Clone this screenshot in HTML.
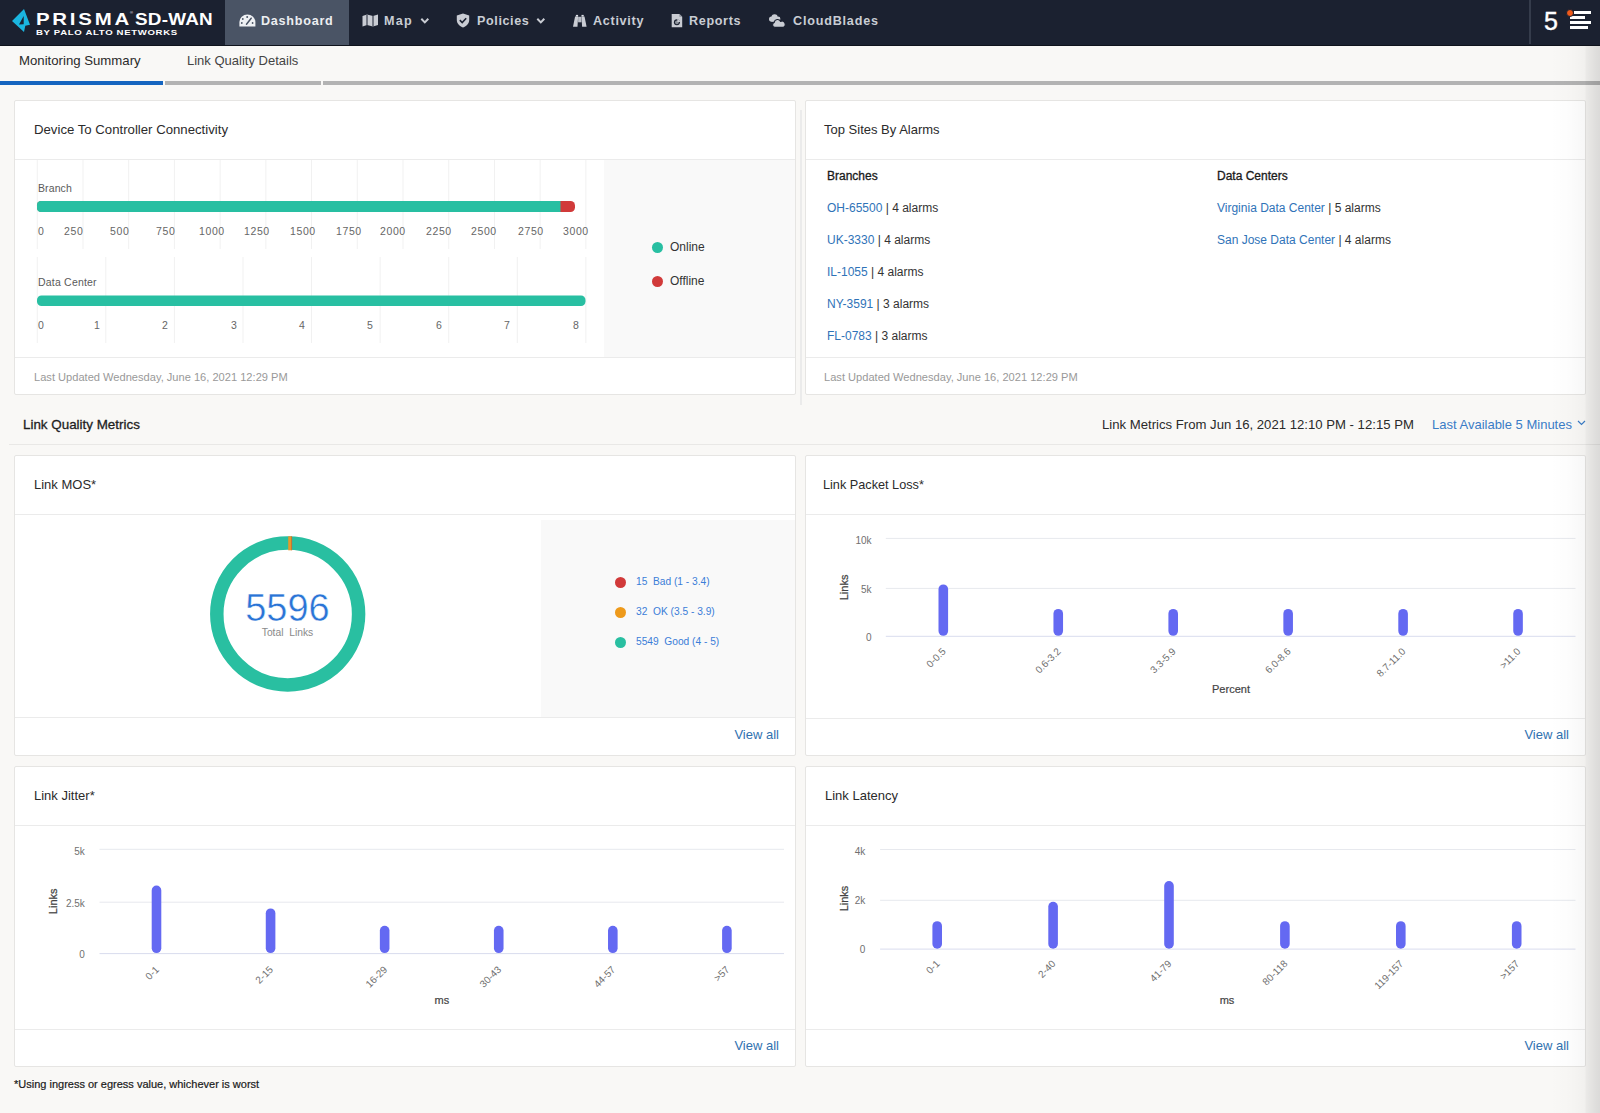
<!DOCTYPE html>
<html><head><meta charset="utf-8">
<style>
*{box-sizing:border-box;margin:0;padding:0}
html,body{width:1600px;height:1113px;overflow:hidden}
body{background:#f9f8f6;font-family:"Liberation Sans",sans-serif;color:#222;position:relative}
.abs{position:absolute;white-space:nowrap}
#hdr{position:absolute;left:0;top:0;width:1600px;height:46px;background:#1b2130;border-bottom:1px solid #0f131c}
#hdr .act{position:absolute;left:225px;top:0;width:124px;height:45px;background:#4a5465}
.nav{position:absolute;top:13.5px;color:#e6e8ec;font-weight:bold;font-size:12.6px;letter-spacing:0.6px;line-height:15px}
#sub{position:absolute;left:0;top:46px;width:1600px;height:39px;background:#f9f8f6}
.tab{position:absolute;top:7px;font-size:13px;color:#2a2a2a;line-height:15px}
.card{position:absolute;background:#fff;border:1px solid #e6e5e3;border-radius:2px;overflow:hidden}
.ctitle{position:absolute;left:19px;font-size:13px;color:#2b2b2b;line-height:15px}
.hline{position:absolute;left:0;right:0;height:1px;background:#ebebeb}
.upd{position:absolute;left:19px;font-size:11.1px;color:#999;line-height:13px}
.va{position:absolute;right:16px;font-size:13px;color:#3171b0;line-height:15px}
.lnk{color:#2f73b8}
.st{font-size:12px;color:#1a1a1a;line-height:14px;-webkit-text-stroke:0.3px #1a1a1a}
.dot{width:11.4px;height:11.4px;border-radius:50%}
.lg{font-size:10.2px;color:#3b7dd8;line-height:12px}
.row{font-size:12px;color:#333;line-height:14px}
.rshadow{position:absolute;left:1550px;top:46px;width:50px;height:1067px;background:linear-gradient(to right,rgba(0,0,0,0) 0%,rgba(0,0,0,0.012) 40%,rgba(0,0,0,0.03) 70%,rgba(0,0,0,0.06) 72%,rgba(0,0,0,0.1) 90%,rgba(0,0,0,0.12) 100%);pointer-events:none}
</style></head><body>

<!-- HEADER -->
<div id="hdr">
  <div class="act"></div>
  <svg class="abs" style="left:0;top:0" width="40" height="45" viewBox="0 0 40 45">
    <path d="M24 9 L30 24.8 L25.3 25.8 L24 32 L12 21 Z M23.7 16 L19 24.5 L23.7 24.3 Z" fill="#1ab5df" fill-rule="evenodd"/>
  </svg>
  <div class="abs" style="left:36px;top:10.5px;font-size:17px;font-weight:bold;color:#fff;letter-spacing:2.3px;line-height:17px;transform:scaleX(1.2);transform-origin:0 0">PRISMA</div>
  <div class="abs" style="left:130px;top:10px;font-size:4px;color:#fff;line-height:5px">®</div>
  <div class="abs" style="left:134.5px;top:10.5px;font-size:17px;font-weight:bold;color:#fff;letter-spacing:0.2px;line-height:17px;transform:scaleX(1.11);transform-origin:0 0">SD-WAN</div>
  <div class="abs" style="left:36px;top:29.2px;font-size:8px;font-weight:bold;color:#fff;letter-spacing:0.55px;line-height:8px;transform:scaleX(1.2);transform-origin:0 0">BY PALO ALTO NETWORKS</div>

  <!-- dashboard gauge icon -->
  <svg class="abs" style="left:239px;top:14px" width="17" height="13" viewBox="0 0 17 13">
    <path d="M0.4 12.6 L0.4 8 A8 7.6 0 0 1 16.4 8 L16.4 12.6 Z" fill="#eef0f3"/>
    <circle cx="8.2" cy="3" r="1" fill="#4a5465"/>
    <circle cx="3.8" cy="5" r="0.9" fill="#4a5465"/>
    <circle cx="2.8" cy="9" r="0.9" fill="#4a5465"/>
    <circle cx="13.6" cy="9" r="0.9" fill="#4a5465"/>
    <path d="M7.5 10.2 L12.2 4.2" stroke="#4a5465" stroke-width="1.5" stroke-linecap="round"/>
  </svg>
  <div class="nav" style="left:261px;color:#eceef1;letter-spacing:0.75px">Dashboard</div>

  <!-- map icon -->
  <svg class="abs" style="left:362px;top:14px" width="17" height="13" viewBox="0 0 17 13">
    <path d="M0.5 2 L5 0.5 L11 2 L16 0.5 L16 11 L11 12.6 L5 11 L0.5 12.6 Z" fill="#c9ccd3"/>
    <path d="M5 0.8 L5 11 M11 2 L11 12.4" stroke="#1b2130" stroke-width="1"/>
  </svg>
  <div class="nav" style="left:384px;letter-spacing:1.2px;color:#c9cdd4">Map</div>
  <svg class="abs" style="left:420px;top:17px" width="10" height="8" viewBox="0 0 10 8">
    <path d="M1.3 1.8 L4.8 5.4 L8.3 1.8" stroke="#c9ccd3" stroke-width="2" fill="none"/>
  </svg>

  <!-- policies shield -->
  <svg class="abs" style="left:456px;top:13px" width="14" height="15" viewBox="0 0 14 15">
    <path d="M7 0.5 L13.2 2.6 L13.2 7 C13.2 10.5 10.5 13 7 14.5 C3.5 13 0.8 10.5 0.8 7 L0.8 2.6 Z" fill="#c9ccd3"/>
    <path d="M3.8 7.2 L6.2 9.5 L10.2 5.2" stroke="#1b2130" stroke-width="1.6" fill="none"/>
  </svg>
  <div class="nav" style="left:477px;letter-spacing:0.6px;color:#c9cdd4">Policies</div>
  <svg class="abs" style="left:536px;top:17px" width="10" height="8" viewBox="0 0 10 8">
    <path d="M1.3 1.8 L4.8 5.4 L8.3 1.8" stroke="#c9ccd3" stroke-width="2" fill="none"/>
  </svg>

  <!-- activity binoculars -->
  <svg class="abs" style="left:573px;top:14px" width="14" height="14" viewBox="0 0 14 14">
    <path d="M2.1 2.5 L5.1 2.5 L4.5 12.8 L0 12.8 Z M8.5 2.5 L11.5 2.5 L13.6 12.8 L9.1 12.8 Z" fill="#c9ccd3"/>
    <rect x="2.9" y="0.9" width="2.2" height="1.6" fill="#dde0e6"/>
    <rect x="8.5" y="0.9" width="2.2" height="1.6" fill="#dde0e6"/>
    <rect x="5.1" y="2.8" width="3.4" height="5.5" fill="#b9bdc6"/>
  </svg>
  <div class="nav" style="left:593px;letter-spacing:0.7px;color:#c9cdd4">Activity</div>

  <!-- reports doc -->
  <svg class="abs" style="left:671px;top:14px" width="12" height="14" viewBox="0 0 12 14">
    <path d="M0.7 0 L8.4 0 L11.2 2.8 L11.2 13.2 L0.7 13.2 Z" fill="#c9ccd3"/>
    <path d="M8.4 0 L8.4 2.8 L11.2 2.8" fill="#8a8f99"/>
    <circle cx="5.9" cy="8.3" r="3" fill="#1b2130"/>
    <circle cx="5.9" cy="8.3" r="1.9" fill="#8a8f99"/>
    <path d="M6.3 5.1 L6.3 7.9 L9.1 7.9 A3 3 0 0 0 6.3 5.1 Z" fill="#c9ccd3"/>
  </svg>
  <div class="nav" style="left:689px;letter-spacing:0.65px;color:#c9cdd4">Reports</div>

  <!-- cloudblades clouds -->
  <svg class="abs" style="left:769px;top:13px" width="18" height="15" viewBox="0 0 18 15">
    <g fill="#c9ccd3">
      <circle cx="5.6" cy="4.3" r="3.1"/><circle cx="9" cy="5.9" r="2.4"/><circle cx="2.6" cy="6.1" r="2.6"/>
      <rect x="2.6" y="5.5" width="6.6" height="3.2"/>
    </g>
    <g fill="#c9ccd3" stroke="#1b2130" stroke-width="1.1">
      <path d="M6 14.4 A2.6 2.6 0 0 1 5.2 9.4 A3.4 3.4 0 0 1 11.6 8.4 A3 3 0 0 1 14.2 14.4 Z"/>
    </g>
  </svg>
  <div class="nav" style="left:793px;letter-spacing:0.8px;color:#c9cdd4">CloudBlades</div>

  <div class="abs" style="left:1529px;top:0;width:2px;height:44px;background:#353c4b"></div>
  <div class="abs" style="left:1544px;top:6px;font-size:25px;color:#fff;line-height:30px;-webkit-text-stroke:0.4px #fff">5</div>
  <div class="abs" style="left:1574px;top:11px;width:17px;height:3px;background:#fff"></div>
  <div class="abs" style="left:1570px;top:16px;width:15px;height:3px;background:#fff"></div>
  <div class="abs" style="left:1570px;top:20.5px;width:21px;height:3px;background:#fff"></div>
  <div class="abs" style="left:1570px;top:25.5px;width:18px;height:3px;background:#fff"></div>
  <div class="abs" style="left:1565.5px;top:8.5px;width:8px;height:8px;border-radius:50%;background:#f15a1a;border:1px solid #1b2130"></div>
</div>

<!-- SUBNAV -->
<div id="sub">
  <div class="tab" style="left:19px;font-size:13.2px">Monitoring Summary</div>
  <div class="tab" style="left:187px;color:#444">Link Quality Details</div>
  <div class="abs" style="left:0;top:35px;width:163px;height:3.5px;background:#1565c0"></div>
  <div class="abs" style="left:165px;top:35px;width:156px;height:3.5px;background:#b3b3b3"></div>
  <div class="abs" style="left:323px;top:35px;width:1277px;height:3.5px;background:#b3b3b3"></div>
</div>

<!-- CARD 1 -->
<div class="card" style="left:14px;top:100px;width:782px;height:295px">
  <div class="ctitle" style="top:21px;font-size:13.2px">Device To Controller Connectivity</div>
  <div class="hline" style="top:58px"></div>
  <div class="abs" style="left:589px;top:59px;width:192px;height:197px;background:#f9f9f9"></div>
  <svg class="abs" style="left:0;top:59px" width="590" height="197" viewBox="0 0 590 197">
    <g stroke="#f1f1f1" stroke-width="1">
      <path d="M22.25 0V89 M67.97 0V89 M113.69 0V89 M159.41 0V89 M205.13 0V89 M250.85 0V89 M296.57 0V89 M342.29 0V89 M388.01 0V89 M433.73 0V89 M479.45 0V89 M525.17 0V89 M570.89 0V89"/>
      <path d="M22.25 97V183 M90.83 97V183 M159.41 97V183 M227.99 97V183 M296.57 97V183 M365.15 97V183 M433.73 97V183 M502.31 97V183 M570.89 97V183"/>
    </g>
    <rect x="22" y="41" width="538" height="11" rx="4.5" fill="#d13a3a"/>
    <rect x="22" y="41" width="20" height="11" rx="4" fill="#28bfa2"/>
    <rect x="30" y="41" width="515.5" height="11" fill="#28bfa2"/>
    <rect x="22" y="135.5" width="548.5" height="10.5" rx="4.5" fill="#28bfa2"/>
  </svg>
  <div class="abs" style="left:23px;top:81px;font-size:10.5px;color:#5a5a5a;letter-spacing:0.1px;line-height:12px">Branch</div>
  <div class="abs" style="left:23px;top:175px;font-size:10.5px;color:#5a5a5a;letter-spacing:0.2px;line-height:12px">Data Center</div>
  <div class="abs" style="top:124px;left:0;font-size:10.5px;color:#666;letter-spacing:0.6px;line-height:12px">
    <span class="abs" style="left:23px">0</span>
    <span class="abs" style="left:49px">250</span>
    <span class="abs" style="left:95px">500</span>
    <span class="abs" style="left:141px">750</span>
    <span class="abs" style="left:184px">1000</span>
    <span class="abs" style="left:229px">1250</span>
    <span class="abs" style="left:275px">1500</span>
    <span class="abs" style="left:321px">1750</span>
    <span class="abs" style="left:365px">2000</span>
    <span class="abs" style="left:411px">2250</span>
    <span class="abs" style="left:456px">2500</span>
    <span class="abs" style="left:503px">2750</span>
    <span class="abs" style="left:548px">3000</span>
  </div>
  <div class="abs" style="top:218px;left:0;font-size:10.5px;color:#666;line-height:12px">
    <span class="abs" style="left:23px">0</span>
    <span class="abs" style="left:79px">1</span>
    <span class="abs" style="left:147px">2</span>
    <span class="abs" style="left:216px">3</span>
    <span class="abs" style="left:284px">4</span>
    <span class="abs" style="left:352px">5</span>
    <span class="abs" style="left:421px">6</span>
    <span class="abs" style="left:489px">7</span>
    <span class="abs" style="left:558px">8</span>
  </div>
  <div class="abs" style="left:637px;top:141px;width:11px;height:11px;border-radius:50%;background:#28bfa2"></div>
  <div class="abs" style="left:655px;top:139px;font-size:12px;color:#333;line-height:14px">Online</div>
  <div class="abs" style="left:637px;top:175px;width:11px;height:11px;border-radius:50%;background:#d13a3a"></div>
  <div class="abs" style="left:655px;top:173px;font-size:12px;color:#333;line-height:14px">Offline</div>
  <div class="hline" style="top:256px"></div>
  <div class="upd" style="top:269.5px">Last Updated Wednesday, June 16, 2021 12:29 PM</div>
</div>
<div class="abs" style="left:800px;top:110px;width:2px;height:295px;background:#ebebeb"></div>
<!-- CARD 2 -->
<div class="card" style="left:805px;top:100px;width:781px;height:295px">
  <div class="ctitle" style="left:18px;top:21px">Top Sites By Alarms</div>
  <div class="hline" style="top:58px"></div>
  <div class="abs st" style="left:21px;top:68px">Branches</div>
  <div class="abs row" style="left:21px;top:99.5px"><span class="lnk">OH-65500</span> | 4 alarms</div>
  <div class="abs row" style="left:21px;top:131.5px"><span class="lnk">UK-3330</span> | 4 alarms</div>
  <div class="abs row" style="left:21px;top:163.5px"><span class="lnk">IL-1055</span> | 4 alarms</div>
  <div class="abs row" style="left:21px;top:195.5px"><span class="lnk">NY-3591</span> | 3 alarms</div>
  <div class="abs row" style="left:21px;top:227.5px"><span class="lnk">FL-0783</span> | 3 alarms</div>
  <div class="abs st" style="left:411px;top:68px">Data Centers</div>
  <div class="abs row" style="left:411px;top:99.5px"><span class="lnk">Virginia Data Center</span> | 5 alarms</div>
  <div class="abs row" style="left:411px;top:131.5px"><span class="lnk">San Jose Data Center</span> | 4 alarms</div>
  <div class="hline" style="top:256px"></div>
  <div class="upd" style="left:18px;top:269.5px">Last Updated Wednesday, June 16, 2021 12:29 PM</div>
</div>

<!-- SECTION HEADER -->
<div class="abs" style="left:23px;top:416.5px;font-size:13.4px;color:#1e1e1e;-webkit-text-stroke:0.3px #1e1e1e;line-height:15px">Link Quality Metrics</div>
<div class="abs" style="left:1102px;top:416.5px;font-size:13.15px;color:#2a2a2a;line-height:15px">Link Metrics From Jun 16, 2021 12:10 PM - 12:15 PM</div>
<div class="abs" style="left:1432px;top:416.5px;font-size:13px;color:#3a7cc6;line-height:15px">Last Available 5 Minutes</div>
<svg class="abs" style="left:1577px;top:419px" width="10" height="8" viewBox="0 0 10 8"><path d="M1 2 L4.5 5.5 L8 2" stroke="#3a7cc6" stroke-width="1.2" fill="none"/></svg>
<div class="abs" style="left:9px;top:444px;width:1591px;height:1px;background:#e9e8e6"></div>

<!-- CARD 3 MOS -->
<div class="card" style="left:14px;top:455px;width:782px;height:301px">
  <div class="ctitle" style="top:21px">Link MOS*</div>
  <div class="hline" style="top:58px"></div>
  <svg class="abs" style="left:0;top:59px" width="520" height="200" viewBox="0 0 520 200">
    <circle cx="272.7" cy="99" r="70.9" fill="none" stroke="#29bfa1" stroke-width="13.5"/>
    <rect x="273.2" y="21.3" width="3.4" height="14" fill="#e39a2a"/>
    <rect x="276.2" y="21.3" width="0.9" height="14" fill="#d0692f"/>
  </svg>
  <div class="abs" style="left:0;width:545px;text-align:center;top:130px;font-size:38px;color:#2a74d6;line-height:44px;-webkit-text-stroke:0.5px #fff">5596</div>
  <div class="abs" style="left:0;width:545px;text-align:center;top:171px;font-size:10.3px;color:#8a8a8a;line-height:12px">Total&nbsp;&nbsp;Links</div>
  <div class="abs" style="left:526px;top:64px;width:255px;height:198px;background:#f9f9f9"></div>
  <div class="abs dot" style="left:600px;top:121px;background:#d13a3a"></div>
  <div class="abs lg" style="left:621px;top:120px">15&nbsp;&nbsp;Bad (1 - 3.4)</div>
  <div class="abs dot" style="left:600px;top:151px;background:#ee9a1b"></div>
  <div class="abs lg" style="left:621px;top:150px">32&nbsp;&nbsp;OK (3.5 - 3.9)</div>
  <div class="abs dot" style="left:600px;top:181px;background:#29bfa1"></div>
  <div class="abs lg" style="left:621px;top:180px">5549&nbsp;&nbsp;Good (4 - 5)</div>
  <div class="hline" style="top:261px"></div>
  <div class="va" style="top:271px">View all</div>
</div>
<!-- CARD 4 PACKET LOSS -->
<div class="card" style="left:805px;top:455px;width:781px;height:301px">
  <div class="ctitle" style="left:17px;top:21.5px;font-size:12.7px">Link Packet Loss*</div>
  <div class="hline" style="top:58px"></div>
    <svg class="abs" style="left:0;top:0" width="780" height="262" viewBox="0 0 780 262">
    <rect x="79.80" y="81.90" width="689.70" height="1" fill="#e7e9ee"/>
    <rect x="79.80" y="131.9" width="689.70" height="1" fill="#e7e9ee"/>
    <rect x="79.80" y="179.80" width="689.70" height="1" fill="#d9dcee"/>
    <text x="65.50" y="87.60" text-anchor="end" font-family="Liberation Sans" font-size="10" fill="#707070">10k</text>
    <text x="65.50" y="136.50" text-anchor="end" font-family="Liberation Sans" font-size="10" fill="#707070">5k</text>
    <text x="65.50" y="185.30" text-anchor="end" font-family="Liberation Sans" font-size="10" fill="#707070">0</text>
    <rect x="132.50" y="128.40" width="9.6" height="51.40" rx="4.8" fill="#6469f2"/>
    <rect x="247.45" y="152.90" width="9.6" height="26.90" rx="4.8" fill="#6469f2"/>
    <rect x="362.40" y="152.90" width="9.6" height="26.90" rx="4.8" fill="#6469f2"/>
    <rect x="477.35" y="152.90" width="9.6" height="26.90" rx="4.8" fill="#6469f2"/>
    <rect x="592.30" y="152.90" width="9.6" height="26.90" rx="4.8" fill="#6469f2"/>
    <rect x="707.25" y="152.90" width="9.6" height="26.90" rx="4.8" fill="#6469f2"/>
    <text x="140.50" y="196.10" text-anchor="end" transform="rotate(-45 140.50 196.10)" font-family="Liberation Sans" font-size="10" fill="#707070">0-0.5</text>
    <text x="255.45" y="196.10" text-anchor="end" transform="rotate(-45 255.45 196.10)" font-family="Liberation Sans" font-size="10" fill="#707070">0.6-3.2</text>
    <text x="370.40" y="196.10" text-anchor="end" transform="rotate(-45 370.40 196.10)" font-family="Liberation Sans" font-size="10" fill="#707070">3.3-5.9</text>
    <text x="485.35" y="196.10" text-anchor="end" transform="rotate(-45 485.35 196.10)" font-family="Liberation Sans" font-size="10" fill="#707070">6.0-8.6</text>
    <text x="600.30" y="196.10" text-anchor="end" transform="rotate(-45 600.30 196.10)" font-family="Liberation Sans" font-size="10" fill="#707070">8.7-11.0</text>
    <text x="715.25" y="196.10" text-anchor="end" transform="rotate(-45 715.25 196.10)" font-family="Liberation Sans" font-size="10" fill="#707070">&gt;11.0</text>
    <text x="38.00" y="131.40" text-anchor="middle" dominant-baseline="central" transform="rotate(-90 38.00 131.40)" font-family="Liberation Sans" font-size="11" fill="#444" stroke="#444" stroke-width="0.25">Links</text>
    <text x="425.00" y="236.5" text-anchor="middle" font-family="Liberation Sans" font-size="11" fill="#444" stroke="#444" stroke-width="0.2">Percent</text>
    </svg>
  <div class="hline" style="top:262px"></div>
  <div class="va" style="top:271px">View all</div>
</div>
<!-- CARD 5 JITTER -->
<div class="card" style="left:14px;top:766px;width:782px;height:301px">
  <div class="ctitle" style="left:19px;top:21px">Link Jitter*</div>
  <div class="hline" style="top:58px"></div>
    <svg class="abs" style="left:0;top:0" width="780" height="262" viewBox="0 0 780 262">
    <rect x="84.50" y="81.80" width="684.50" height="1" fill="#e7e9ee"/>
    <rect x="84.50" y="134.7" width="684.50" height="1" fill="#e7e9ee"/>
    <rect x="84.50" y="186.10" width="684.50" height="1" fill="#d9dcee"/>
    <text x="69.80" y="87.90" text-anchor="end" font-family="Liberation Sans" font-size="10" fill="#707070">5k</text>
    <text x="69.80" y="139.70" text-anchor="end" font-family="Liberation Sans" font-size="10" fill="#707070">2.5k</text>
    <text x="69.80" y="190.80" text-anchor="end" font-family="Liberation Sans" font-size="10" fill="#707070">0</text>
    <rect x="136.70" y="118.60" width="9.6" height="67.50" rx="4.8" fill="#6469f2"/>
    <rect x="250.78" y="141.40" width="9.6" height="44.70" rx="4.8" fill="#6469f2"/>
    <rect x="364.86" y="158.75" width="9.6" height="27.35" rx="4.8" fill="#6469f2"/>
    <rect x="478.94" y="158.75" width="9.6" height="27.35" rx="4.8" fill="#6469f2"/>
    <rect x="593.02" y="158.75" width="9.6" height="27.35" rx="4.8" fill="#6469f2"/>
    <rect x="707.10" y="158.75" width="9.6" height="27.35" rx="4.8" fill="#6469f2"/>
    <text x="144.70" y="203.20" text-anchor="end" transform="rotate(-45 144.70 203.20)" font-family="Liberation Sans" font-size="10" fill="#707070">0-1</text>
    <text x="258.78" y="203.20" text-anchor="end" transform="rotate(-45 258.78 203.20)" font-family="Liberation Sans" font-size="10" fill="#707070">2-15</text>
    <text x="372.86" y="203.20" text-anchor="end" transform="rotate(-45 372.86 203.20)" font-family="Liberation Sans" font-size="10" fill="#707070">16-29</text>
    <text x="486.94" y="203.20" text-anchor="end" transform="rotate(-45 486.94 203.20)" font-family="Liberation Sans" font-size="10" fill="#707070">30-43</text>
    <text x="601.02" y="203.20" text-anchor="end" transform="rotate(-45 601.02 203.20)" font-family="Liberation Sans" font-size="10" fill="#707070">44-57</text>
    <text x="715.10" y="203.20" text-anchor="end" transform="rotate(-45 715.10 203.20)" font-family="Liberation Sans" font-size="10" fill="#707070">&gt;57</text>
    <text x="38.00" y="134.30" text-anchor="middle" dominant-baseline="central" transform="rotate(-90 38.00 134.30)" font-family="Liberation Sans" font-size="11" fill="#444" stroke="#444" stroke-width="0.25">Links</text>
    <text x="426.90" y="236.5" text-anchor="middle" font-family="Liberation Sans" font-size="11" fill="#444" stroke="#444" stroke-width="0.2">ms</text>
    </svg>
  <div class="hline" style="top:262px"></div>
  <div class="va" style="top:271px">View all</div>
</div>
<!-- CARD 6 LATENCY -->
<div class="card" style="left:805px;top:766px;width:781px;height:301px">
  <div class="ctitle" style="left:19px;top:21px">Link Latency</div>
  <div class="hline" style="top:58px"></div>
    <svg class="abs" style="left:0;top:0" width="780" height="262" viewBox="0 0 780 262">
    <rect x="74.10" y="82.00" width="695.40" height="1" fill="#e7e9ee"/>
    <rect x="74.10" y="132.8" width="695.40" height="1" fill="#e7e9ee"/>
    <rect x="74.10" y="181.60" width="695.40" height="1" fill="#d9dcee"/>
    <text x="59.30" y="88.00" text-anchor="end" font-family="Liberation Sans" font-size="10" fill="#707070">4k</text>
    <text x="59.30" y="137.10" text-anchor="end" font-family="Liberation Sans" font-size="10" fill="#707070">2k</text>
    <text x="59.30" y="186.30" text-anchor="end" font-family="Liberation Sans" font-size="10" fill="#707070">0</text>
    <rect x="126.40" y="154.20" width="9.6" height="27.50" rx="4.8" fill="#6469f2"/>
    <rect x="242.30" y="134.80" width="9.6" height="46.90" rx="4.8" fill="#6469f2"/>
    <rect x="358.20" y="114.00" width="9.6" height="67.70" rx="4.8" fill="#6469f2"/>
    <rect x="474.10" y="154.20" width="9.6" height="27.50" rx="4.8" fill="#6469f2"/>
    <rect x="590.00" y="154.20" width="9.6" height="27.50" rx="4.8" fill="#6469f2"/>
    <rect x="705.90" y="154.20" width="9.6" height="27.50" rx="4.8" fill="#6469f2"/>
    <text x="134.40" y="197.40" text-anchor="end" transform="rotate(-45 134.40 197.40)" font-family="Liberation Sans" font-size="10" fill="#707070">0-1</text>
    <text x="250.30" y="197.40" text-anchor="end" transform="rotate(-45 250.30 197.40)" font-family="Liberation Sans" font-size="10" fill="#707070">2-40</text>
    <text x="366.20" y="197.40" text-anchor="end" transform="rotate(-45 366.20 197.40)" font-family="Liberation Sans" font-size="10" fill="#707070">41-79</text>
    <text x="482.10" y="197.40" text-anchor="end" transform="rotate(-45 482.10 197.40)" font-family="Liberation Sans" font-size="10" fill="#707070">80-118</text>
    <text x="598.00" y="197.40" text-anchor="end" transform="rotate(-45 598.00 197.40)" font-family="Liberation Sans" font-size="10" fill="#707070">119-157</text>
    <text x="713.90" y="197.40" text-anchor="end" transform="rotate(-45 713.90 197.40)" font-family="Liberation Sans" font-size="10" fill="#707070">&gt;157</text>
    <text x="38.00" y="131.50" text-anchor="middle" dominant-baseline="central" transform="rotate(-90 38.00 131.50)" font-family="Liberation Sans" font-size="11" fill="#444" stroke="#444" stroke-width="0.25">Links</text>
    <text x="421.00" y="236.5" text-anchor="middle" font-family="Liberation Sans" font-size="11" fill="#444" stroke="#444" stroke-width="0.2">ms</text>
    </svg>
  <div class="hline" style="top:262px"></div>
  <div class="va" style="top:271px">View all</div>
</div>

<div class="abs" style="left:14px;top:1078px;font-size:11px;color:#1a1a1a;-webkit-text-stroke:0.2px #1a1a1a;line-height:13px">*Using ingress or egress value, whichever is worst</div>

<div class="rshadow"></div>
</body></html>
